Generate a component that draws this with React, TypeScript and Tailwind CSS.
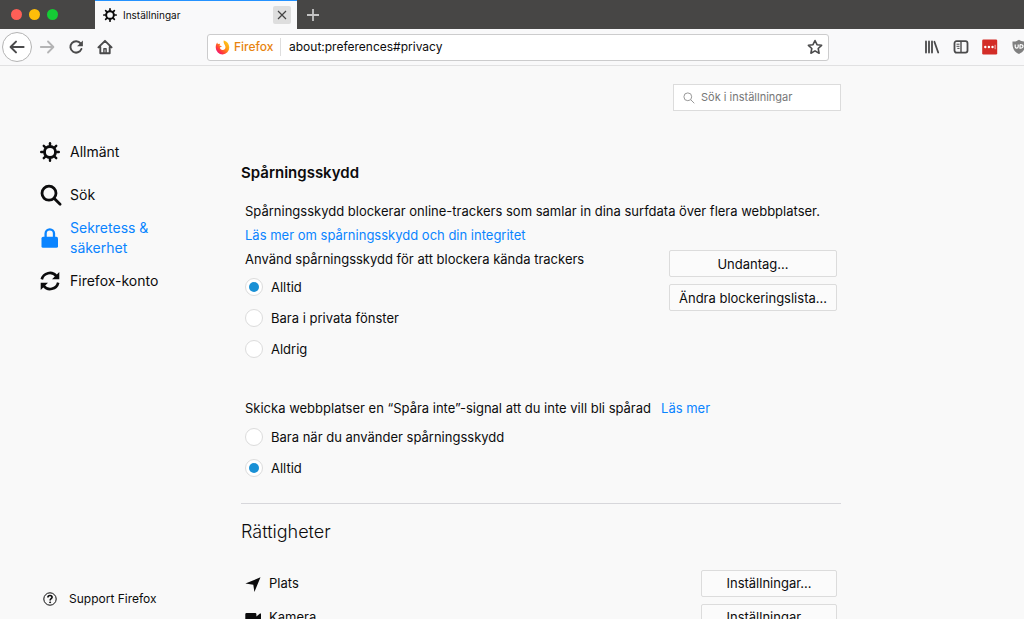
import React, { useState } from 'react';

type IconProps = { className?: string };

const GearIcon = ({ className }: IconProps) => (
  <svg viewBox="0 0 20 20" className={className} fill="none" stroke="currentColor" strokeLinecap="round" aria-hidden="true">
    <circle cx="10" cy="10" r="5.5" strokeWidth="2.8" />
    {[0, 45, 90, 135, 180, 225, 270, 315].map(a => (
      <path key={a} d="M10 3.6V1.2" strokeWidth="2.4" transform={`rotate(${a} 10 10)`} />
    ))}
  </svg>
);

const SearchIcon = ({ className }: IconProps) => (
  <svg viewBox="0 0 20 20" className={`overflow-visible ${className}`} fill="none" stroke="currentColor" strokeWidth="2.8" strokeLinecap="round" aria-hidden="true">
    <circle cx="9" cy="8.200" r="7" />
    <path d="M14.300 13.500l5.800 5.800" />
  </svg>
);

const LockIcon = ({ className }: IconProps) => (
  <svg viewBox="0 0 20 20" className={className} aria-hidden="true">
    <path d="M5.600 9V5.600a4.200 4.200 0 0 1 8.400 0V9" fill="none" stroke="currentColor" strokeWidth="2.300" />
    <rect x="1.500" y="8.800" width="16.500" height="11" rx="1.600" fill="currentColor" />
  </svg>
);

const SyncIcon = ({ className }: IconProps) => (
  <svg viewBox="0 0 20 20" className={className} aria-hidden="true">
    <path d="M1.8 8.400a8.300 8.300 0 0 1 14.600-3.300M18.200 11.600a8.300 8.300 0 0 1-14.600 3.300" fill="none" stroke="currentColor" strokeWidth="2.600" />
    <path d="M19.300.9v7.300H12zM.7 19.100v-7.300H8z" fill="currentColor" />
  </svg>
);

const HelpIcon = ({ className }: IconProps) => (
  <svg viewBox="0 0 14 14" className={className} fill="none" stroke="currentColor" aria-hidden="true">
    <circle cx="7" cy="7" r="6.200" strokeWidth="1" />
    <path d="M4.900 5.500c0-1.300 1-2 2.100-2s2.100.7 2.100 1.800c0 1.300-2 1.500-2 3.100" strokeWidth="1.600" />
    <circle cx="7.100" cy="10.300" r=".5" fill="currentColor" />
  </svg>
);

const BackIcon = ({ className }: IconProps) => (
  <svg viewBox="0 0 16 16" className={className} fill="none" stroke="currentColor" strokeWidth="2" strokeLinecap="round" strokeLinejoin="round" aria-hidden="true">
    <path d="M7 2.600L1.600 8 7 13.400M2 8h12.600" />
  </svg>
);

const ForwardIcon = ({ className }: IconProps) => (
  <svg viewBox="0 0 16 16" className={className} fill="none" stroke="currentColor" strokeWidth="1.800" strokeLinecap="round" strokeLinejoin="round" aria-hidden="true">
    <path d="M9 2.500L14.400 8 9 13.500M14 8H1.800" />
  </svg>
);

const ReloadIcon = ({ className }: IconProps) => (
  <svg viewBox="0 0 16 16" className={className} aria-hidden="true">
    <path d="M12.600 4.400A5.700 5.700 0 1 0 13.400 10" fill="none" stroke="currentColor" strokeWidth="2" strokeLinecap="round" />
    <path d="M14.900 1.400v5.800H9.100z" fill="currentColor" />
  </svg>
);

const HomeIcon = ({ className }: IconProps) => (
  <svg viewBox="0 0 16 16" className={className} fill="none" stroke="currentColor" strokeWidth="1.900" strokeLinecap="round" strokeLinejoin="round" aria-hidden="true">
    <path d="M1.400 8.400L8 1.800l6.600 6.600M3.300 8v6.200h9.400V8" />
    <path d="M6.900 14V9.800h2.200V14" strokeWidth="1.400" />
  </svg>
);

const FirefoxIcon = ({ className }: IconProps) => (
  <svg viewBox="0 0 16 16" className={className} aria-hidden="true">
    <defs>
      <linearGradient id="fx" x1="1" y1="0" x2=".15" y2=".9">
        <stop offset="0" stopColor="#ffdc1e" />
        <stop offset=".45" stopColor="#ff9a12" />
        <stop offset=".8" stopColor="#ff3a3c" />
        <stop offset="1" stopColor="#f0147a" />
      </linearGradient>
    </defs>
    <path
      d="M9.200.6c2.600.5 6 3 6 7.400A7.200 7.200 0 0 1 .8 8.300C.7 5.800 1.200 4.200 2.300 2.600l.7 1.700 2.600-.3-.8 1.800 2.700.9-2.300 1.300c.1 1.700 1.300 2.600 2.900 2.600 2.200 0 3.400-1.700 3-3.800C10.800 5.100 8.700 3.800 9.200.6z"
      fill="url(#fx)"
    />
  </svg>
);

const StarIcon = ({ className }: IconProps) => (
  <svg viewBox="0 0 16 16" className={className} fill="none" stroke="currentColor" strokeWidth="1.600" strokeLinejoin="round" aria-hidden="true">
    <path d="M8 1.500l2 4.200 4.600.6-3.400 3.200.9 4.700L8 11.900l-4.100 2.300.9-4.700L1.400 6.300 6 5.700z" />
  </svg>
);

const LibraryIcon = ({ className }: IconProps) => (
  <svg viewBox="0 0 16 16" className={className} fill="none" stroke="currentColor" strokeWidth="1.800" strokeLinecap="round" aria-hidden="true">
    <path d="M2 2.500v11M5 2.500v11M8 2.500v11M10.400 2.800l3.800 10.700" />
  </svg>
);

const SidebarIcon = ({ className }: IconProps) => (
  <svg viewBox="0 0 16 16" className={className} fill="none" stroke="currentColor" aria-hidden="true">
    <rect x="1.500" y="2.200" width="13" height="11.400" rx="2" strokeWidth="1.800" />
    <path d="M8 2.500v11" strokeWidth="1.400" />
    <path d="M3.500 5.200h3M3.500 7.300h3M4.300 9.400h2.200" strokeWidth="1" />
  </svg>
);

const DotsIcon = ({ className }: IconProps) => (
  <svg viewBox="0 0 16 16" className={className} aria-hidden="true">
    <rect x=".2" y=".6" width="15" height="14.800" rx="1.200" fill="#d32d27" />
    <g fill="#fff">
      <circle cx="3.300" cy="8" r="1.200" />
      <circle cx="6.900" cy="8" r="1.200" />
      <circle cx="10.500" cy="8" r="1.200" />
      <rect x="12.700" y="5.800" width=".8" height="4.400" opacity=".8" />
    </g>
  </svg>
);

const ShieldIcon = ({ className }: IconProps) => (
  <svg viewBox="0 0 16 16" className={className} aria-hidden="true">
    <path d="M8 .8c2 1.300 4 1.800 6.500 1.800C14.800 9 13 12.800 8 15 3 12.800 1.200 9 1.500 2.600 4 2.600 6 2.100 8 .8z" fill="#808080" />
    <path d="M4.200 5.500v2.300c0 1.700 3 1.700 3 0V5.500M9 5.500v3.600c4 .3 4-3.900 0-3.600" fill="none" stroke="#fff" strokeWidth="1.200" />
  </svg>
);

const PlaceIcon = ({ className }: IconProps) => (
  <svg viewBox="0 0 16 16" className={className} fill="currentColor" aria-hidden="true">
    <path d="M15.500 1.300L9.400 16 8.300 8.700.4 7.500z" />
  </svg>
);

const CameraIcon = ({ className }: IconProps) => (
  <svg viewBox="0 0 16 16" className={className} fill="currentColor" aria-hidden="true">
    <path d="M1.500 3h8.700a1.200 1.200 0 0 1 1.200 1.200v2.400L15 3.400h1v9.200h-1l-3.600-3.200v2.400a1.200 1.200 0 0 1-1.200 1.200H1.500a1.200 1.200 0 0 1-1.200-1.200V4.200A1.200 1.200 0 0 1 1.500 3z" />
  </svg>
);

const categories = [
  { id: 'general', label: 'Allmänt', icon: GearIcon },
  { id: 'search', label: 'Sök', icon: SearchIcon },
  { id: 'privacy', label: 'Sekretess & säkerhet', icon: LockIcon },
  { id: 'sync', label: 'Firefox-konto', icon: SyncIcon },
];

const permissions = [
  { id: 'location', label: 'Plats', icon: PlaceIcon },
  { id: 'camera', label: 'Kamera', icon: CameraIcon },
];

const Radio = ({ name, label, checked, onChange }: { name: string; label: string; checked: boolean; onChange: () => void }) => (
  <label className="flex h-[31px] items-center gap-2">
    <input
      type="radio"
      name={name}
      checked={checked}
      onChange={onChange}
      className="grid size-[18px] shrink-0 appearance-none place-content-center rounded-full border border-[#dcdcdc] bg-white before:size-2.5 before:rounded-full before:content-[''] checked:before:bg-[#1990d5]"
    />
    {label}
  </label>
);

const PrefButton = ({ label, className }: { label: string; className: string }) => (
  <button className={`h-[27px] shrink-0 rounded-xs border border-[#dcdcdc] bg-[#fbfbfb] text-center whitespace-nowrap ${className}`}>
    {label}
  </button>
);

const App: React.FC = () => {
  const [active, setActive] = useState('privacy');
  const [tracking, setTracking] = useState('Alltid');
  const [dnt, setDnt] = useState('Alltid');
  const [url, setUrl] = useState('about:preferences#privacy');
  const [query, setQuery] = useState('');

  return (
    <div className="flex h-screen flex-col overflow-hidden bg-[#f9f9f9] font-['Inter','Liberation_Sans',sans-serif] text-sm text-[#0c0c0d]">
      <div className="flex h-[29px] shrink-0 bg-[#474645]">
        <div className="flex w-[95px] items-center gap-[7px] pl-[11px]">
          <button aria-label="Stäng fönster" className="size-[11px] rounded-full bg-[#ff5f57]" />
          <button aria-label="Minimera" className="size-[11px] rounded-full bg-[#ffbd09]" />
          <button aria-label="Zooma" className="size-[11px] rounded-full bg-[#15cc35]" />
        </div>
        <div className="flex w-[202px] items-center border-t border-[#2492ff] bg-[#f9f9fa] pr-1.5 pl-2">
          <GearIcon className="size-3.5" />
          <span className="ml-1.5 flex-1 text-[10px]">Inställningar</span>
          <button aria-label="Stäng flik" className="grid size-[18px] place-items-center rounded-xs bg-[#dedede]">
            <svg viewBox="0 0 10 10" className="size-2.5" stroke="#444" strokeWidth="1.200" aria-hidden="true">
              <path d="M1 1l8 8M9 1L1 9" />
            </svg>
          </button>
        </div>
        <button aria-label="Ny flik" className="grid w-8 place-items-center">
          <svg viewBox="0 0 12 12" className="size-3" stroke="#c4c4c4" strokeWidth="1.800" aria-hidden="true">
            <path d="M6 0v12M0 6h12" />
          </svg>
        </button>
      </div>

      <div className="flex h-[37px] shrink-0 items-center border-b border-[#e1e1e2] bg-[#f9f9fa] text-[#4a4a4b]">
        <button aria-label="Tillbaka" className="ml-0.5 grid size-[30px] shrink-0 place-items-center rounded-full border border-[#b4b4b4] bg-white">
          <BackIcon className="size-4" />
        </button>
        <button aria-label="Framåt" className="grid w-[29px] shrink-0 place-items-center text-[#b4b4b5]"><ForwardIcon className="size-4" /></button>
        <button aria-label="Ladda om" className="grid w-[29px] shrink-0 place-items-center"><ReloadIcon className="size-4" /></button>
        <button aria-label="Hem" className="grid w-[29px] shrink-0 place-items-center"><HomeIcon className="size-4" /></button>
        <div className="ml-[88px] flex h-[27px] min-w-0 flex-1 items-center rounded-[3px] border border-[#cccccd] bg-white px-[5px]">
          <FirefoxIcon className="mx-0.5 size-[15px] shrink-0" />
          <span className="ml-0.5 w-[46px] text-xs font-medium text-[#e8840f]">Firefox</span>
          <span className="h-[18px] w-px bg-[#dedede]" />
          <input
            aria-label="Adress"
            value={url}
            onChange={e => setUrl(e.target.value)}
            className="ml-2 min-w-0 flex-1 bg-transparent text-xs text-[#0c0c0d] outline-none"
          />
          <button aria-label="Bokmärk sidan"><StarIcon className="size-4" /></button>
        </div>
        <div className="flex w-[195px] shrink-0 gap-[13px] overflow-hidden pl-[95px]">
          <button aria-label="Bibliotek" className="shrink-0"><LibraryIcon className="size-4" /></button>
          <button aria-label="Sidofält" className="shrink-0"><SidebarIcon className="size-4" /></button>
          <button aria-label="Lösenord" className="shrink-0"><DotsIcon className="size-4" /></button>
          <button aria-label="uBlock" className="shrink-0"><ShieldIcon className="size-4" /></button>
        </div>
      </div>

      <div className="flex min-h-0 flex-1">
        <aside className="flex w-[241px] shrink-0 flex-col pt-16 pl-10">
          <nav>
            {categories.map(({ id, label, icon: Icon }) => (
              <button
                key={id}
                onClick={() => setActive(id)}
                className={`flex h-[43px] w-[130px] items-center gap-2.5 text-left leading-5 ${active === id ? 'text-[#0a84ff]' : ''}`}
              >
                <Icon className="size-5 shrink-0" />
                <span>{label}</span>
              </button>
            ))}
          </nav>
          <a href="#support" className="mt-auto mb-2.5 flex items-center gap-3 pl-[3px] text-xs leading-5">
            <HelpIcon className="size-3.5" />
            Support Firefox
          </a>
        </aside>

        <main className="min-w-0 flex-1 overflow-hidden pt-[18px] text-[13px]">
          <div className="max-w-[600px]">
            <label className="ml-auto flex h-[27px] w-[168px] items-center gap-1.5 border border-[#dcdcdc] bg-white pl-[9px] text-[#999]">
              <svg viewBox="0 0 12 12" className="size-3 shrink-0" fill="none" stroke="currentColor" aria-hidden="true">
                <circle cx="4.800" cy="4.800" r="3.900" />
                <path d="M7.700 7.700l3.600 3.600" />
              </svg>
              <input
                aria-label="Sök i inställningar"
                placeholder="Sök i inställningar"
                value={query}
                onChange={e => setQuery(e.target.value)}
                className="min-w-0 flex-1 bg-transparent text-[11px] text-[#0c0c0d] outline-none placeholder:text-[#777]"
              />
            </label>

            <h2 className="mt-[50px] text-[15px] leading-6 font-semibold">Spårningsskydd</h2>
            <div className="mt-3.5 px-1 leading-6">
              <p className="whitespace-nowrap">Spårningsskydd blockerar online-trackers som samlar in dina surfdata över flera webbplatser.</p>
              <p><a href="#tracking" className="text-[#0a84ff]">Läs mer om spårningsskydd och din integritet</a></p>
              <div className="flex justify-between">
                <div>
                  <p>Använd spårningsskydd för att blockera kända trackers</p>
                  <div className="flex flex-col">
                    {['Alltid', 'Bara i privata fönster', 'Aldrig'].map(o => (
                      <Radio key={o} name="tracking" label={o} checked={tracking === o} onChange={() => setTracking(o)} />
                    ))}
                  </div>
                </div>
                <div className="flex flex-col gap-[7px] pt-[3px]">
                  <PrefButton label="Undantag..." className="w-[168px]" />
                  <PrefButton label="Ändra blockeringslista..." className="w-[168px]" />
                </div>
              </div>
              <p className="mt-8">
                Skicka webbplatser en “Spåra inte”-signal att du inte vill bli spårad
                <a href="#dnt" className="ml-2.5 text-[#0a84ff]">Läs mer</a>
              </p>
              <div className="mt-px flex flex-col">
                {['Bara när du använder spårningsskydd', 'Alltid'].map(o => (
                  <Radio key={o} name="dnt" label={o} checked={dnt === o} onChange={() => setDnt(o)} />
                ))}
              </div>
            </div>

            <hr className="mt-5 border-[#d7d7db]" />

            <h2 className="mt-3.5 text-lg leading-7 font-light">Rättigheter</h2>
            <ul className="mt-6 flex flex-col gap-[7px] px-1">
              {permissions.map(({ id, label, icon: Icon }) => (
                <li key={id} className="flex items-center">
                  <Icon className="size-4" />
                  <span className="ml-2 flex-1">{label}</span>
                  <PrefButton label="Inställningar..." className="w-[136px]" />
                </li>
              ))}
            </ul>
          </div>
        </main>
      </div>
    </div>
  );
};

export default App;
